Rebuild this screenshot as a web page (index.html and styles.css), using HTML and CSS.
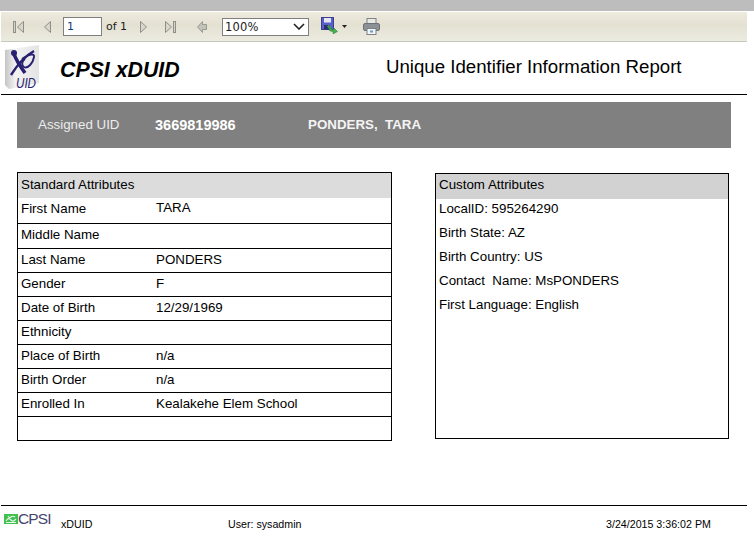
FILE: index.html
```html
<!DOCTYPE html>
<html lang="en">
<head>
<meta charset="utf-8">
<title>CPSI xDUID</title>
<link rel="stylesheet" href="styles.css">
</head>
<body>
<div class="topband"></div>
<div class="page">
  <div class="toolbar">
    <svg class="tool t-first" width="12" height="12" viewBox="0 0 12 12"><rect x="0.5" y="0.5" width="2" height="11" fill="#d8d6cc" stroke="#8f8f8a"/><path d="M10.5 0.5v11L4.5 6z" fill="#d8d6cc" stroke="#8f8f8a"/></svg>
    <svg class="tool t-prev" width="7" height="12" viewBox="0 0 7 12"><path d="M6.5 0.5v11L0.5 6z" fill="#d8d6cc" stroke="#8f8f8a"/></svg>
    <div class="pagebox">1</div>
    <span class="of">of 1</span>
    <svg class="tool t-next" width="7" height="12" viewBox="0 0 7 12"><path d="M0.5 0.5v11L6.5 6z" fill="#d8d6cc" stroke="#8f8f8a"/></svg>
    <svg class="tool t-last" width="12" height="12" viewBox="0 0 12 12"><path d="M0.5 0.5v11L6.5 6z" fill="#d8d6cc" stroke="#8f8f8a"/><rect x="8.5" y="0.5" width="2" height="11" fill="#d8d6cc" stroke="#8f8f8a"/></svg>
    <svg class="tool t-back" width="10" height="12" viewBox="0 0 10 12"><path d="M5.5 0.5L0.5 6l5 5.5V8.5h4v-5h-4z" fill="#c4c3ba" stroke="#9a9a94"/></svg>
    <div class="zoombox"><span>100%</span><svg width="12" height="7" viewBox="0 0 12 7"><path d="M1 1l5 5 5-5" fill="none" stroke="#222" stroke-width="1.6"/></svg></div>
    <svg class="tool t-save" width="17" height="17" viewBox="0 0 17 17"><rect x="0.5" y="0.5" width="12" height="12" fill="#5a5fc8" stroke="#3b3f8e"/><rect x="3" y="1" width="7" height="4.5" fill="#e6e6f2"/><rect x="3" y="8" width="6" height="4.5" fill="#2c2f70"/><path d="M7 8.5l2.500 3.500" stroke="#3fa34a" stroke-width="2.400"/><path d="M8 10.500l4 2.500 1-2 3.500 3.500-4.500 2.500.3-2-4-1.500z" fill="#46ad50" stroke="#2c7b36" stroke-width=".5"/></svg>
    <svg class="tool t-caret" width="5" height="3" viewBox="0 0 5 3"><path d="M0 0h5L2.500 3z" fill="#222"/></svg>
    <svg class="tool t-print" width="17" height="17" viewBox="0 0 17 17"><rect x="4" y="0.5" width="9" height="6" fill="#e9e9e6" stroke="#7d8288"/><rect x="0.500" y="5.500" width="16" height="7" rx="1.500" fill="#8c9196" stroke="#6d7277"/><rect x="4" y="10.500" width="9" height="6" fill="#f4f4f2" stroke="#7d8288"/><rect x="7" y="12.500" width="3" height="2" fill="#5aa0d0"/></svg>
  </div>

  <header class="head">
    <svg class="logo" width="44" height="48" viewBox="0 0 44 48">
      <defs><linearGradient id="box" x1="0" x2="1" y1="0" y2="0"><stop offset="0" stop-color="#c4c4c4"/><stop offset=".3" stop-color="#f2f2f2"/><stop offset="1" stop-color="#e4e4e4"/></linearGradient></defs>
      <path d="M1 5L35 0v38L5 44 1 40z" fill="url(#box)"/>
      <circle cx="10" cy="8" r="3" fill="#27216f"/>
      <path d="M10 9C12 15 16 21 21 28" fill="none" stroke="#27216f" stroke-width="3.600"/>
      <path d="M7 30C12 22 21 11 30 6" fill="none" stroke="#27216f" stroke-width="2.400"/>
      <path d="M18 14C25 9 31 8 30 12C29 18 24 24 20 22C17 20 18 16 21 14" fill="none" stroke="#27216f" stroke-width="1.900"/>
      <text class="logo-uid" x="12" y="43" textLength="20" lengthAdjust="spacingAndGlyphs">UID</text>
    </svg>
    <div class="brand">CPSI xDUID</div>
    <div class="report">Unique Identifier Information Report</div>
  </header>

  <section class="band">
    <span class="b-label">Assigned UID</span>
    <span class="b-id">3669819986</span>
    <span class="b-name">PONDERS,&nbsp; TARA</span>
  </section>

  <main class="tables">
    <div class="std">
      <div class="std-head">Standard Attributes</div>
      <div class="row r-first"><span class="k">First Name</span><span class="v v-up">TARA</span></div>
      <div class="row r-mid"><span class="k">Middle Name</span></div>
      <div class="row"><span class="k">Last Name</span><span class="v">PONDERS</span></div>
      <div class="row"><span class="k">Gender</span><span class="v">F</span></div>
      <div class="row"><span class="k">Date of Birth</span><span class="v">12/29/1969</span></div>
      <div class="row"><span class="k">Ethnicity</span></div>
      <div class="row"><span class="k">Place of Birth</span><span class="v">n/a</span></div>
      <div class="row"><span class="k">Birth Order</span><span class="v">n/a</span></div>
      <div class="row"><span class="k">Enrolled In</span><span class="v">Kealakehe Elem School</span></div>
      <div class="row"></div>
    </div>
    <div class="custom">
      <div class="cus-head">Custom Attributes</div>
      <div class="cus-row">LocalID: 595264290</div>
      <div class="cus-row">Birth State: AZ</div>
      <div class="cus-row">Birth Country: US</div>
      <div class="cus-row">Contact&nbsp; Name: MsPONDERS</div>
      <div class="cus-row">First Language: English</div>
    </div>
  </main>

  <footer class="foot">
    <div class="foot-logo">
      <svg width="14" height="10" viewBox="0 0 14 10"><rect width="14" height="10" fill="#3fc04f"/><path d="M2 7c2-3 3-3 5-1s3 1 5-1M4 2c1 2 2 2 3 1s3-1 4 0M2 8.500h10" fill="none" stroke="#e9f9e9" stroke-width="1.100"/></svg>
      <span class="cpsi">CPSI</span>
    </div>
    <span class="f-app">xDUID</span>
    <span class="f-user">User: sysadmin</span>
    <span class="f-date">3/24/2015 3:36:02 PM</span>
  </footer>
</div>
</body>
</html>
```

FILE: styles.css
```css
* { box-sizing: border-box; }
html, body { margin: 0; padding: 0; background: #fff; }
body { font-family: "Liberation Sans", Arial, sans-serif; color: #000; width: 754px; height: 543px; overflow: hidden; }
.topband { height: 11px; background: #bdbdbd; }
.page { width: 746px; margin-left: 1px; padding-top: 1px; }

.toolbar {
  height: 30px;
  display: flex;
  align-items: center;
  background: linear-gradient(#eeebdf 0%, #e4e1d2 45%, #ecebe0 100%);
  border-bottom: 1px solid #c9c8c0;
  font-family: "DejaVu Sans", Verdana, sans-serif;
  font-size: 11px;
  color: #1c1c1c;
}
.tool { flex: none; display: block; }
.t-first { margin-left: 12px; }
.t-prev { margin-left: 19px; }
.pagebox {
  width: 39px; height: 19px; margin-left: 12px;
  background: #fff; border: 1px solid #7f7f7f;
  padding: 2px 0 0 3px; line-height: 13px; color: #0d3d78;
}
.of { margin-left: 4px; width: 21px; white-space: nowrap; }
.t-next { margin-left: 13px; }
.t-last { margin-left: 18px; }
.t-back { margin-left: 20px; }
.zoombox {
  width: 87px; height: 18px; margin-left: 15px;
  background: #fff; border: 1px solid #7f7f7f;
  display: flex; align-items: center; justify-content: space-between;
  padding: 0 3px 0 2px; font-size: 11.500px; letter-spacing: .2px;
}
.t-save { margin: -3px 0 0 12px; }
.t-caret { margin-left: 4px; }
.t-print { margin-left: 16px; }

.head { height: 53px; border-bottom: 1px solid #000; display: flex; padding-left: 3px; }
.logo { flex: none; margin-top: 3px; }
.brand { margin: 16px 0 0 12px; width: 326px; font-size: 21.330px; font-weight: bold; font-style: italic; line-height: 24px; color: #000; }
.report { margin-top: 14px; font-size: 18.670px; line-height: 22px; white-space: nowrap; }
.logo-uid { font-family: "Liberation Sans", sans-serif; font-size: 15px; font-style: italic; fill: #27216f; }

.band {
  margin: 7px 0 0 16px; width: 714px; height: 46px;
  background: #808080; color: #fff; display: flex; align-items: center;
  padding-left: 21px;
}
.b-label { width: 117px; font-size: 13.330px; color: #ececec; margin-top: -1px; }
.b-id { width: 153px; font-size: 14.500px; font-weight: bold; }
.b-name { font-size: 13.330px; font-weight: bold; color: #f4f4f4; margin-top: -1px; white-space: nowrap; }

.tables { display: flex; align-items: flex-start; margin: 24px 0 0 16px; font-size: 13.330px; line-height: 15px; }
.std { width: 375px; height: 269px; border: 1px solid #000; }
.std-head { height: 25px; background: #dcdcdc; padding: 4px 0 0 3px; }
.row { height: 24px; border-bottom: 1px solid #000; display: flex; padding: 3px 0 0 3px; }
.row:last-child { border-bottom: none; }
.r-first { height: 26px; }
.r-mid { height: 25px; }
.k { width: 135px; flex: none; }
.v-up { margin-top: -1px; }

.custom { width: 294px; height: 266px; margin: 1px 0 0 43px; border: 1px solid #000; }
.cus-head { height: 25px; background: #d2d2d2; padding: 3px 0 0 3px; }
.cus-row { height: 24px; padding: 2px 0 0 3px; }

.foot { margin-top: 64px; border-top: 1px solid #000; height: 30px; display: flex; font-size: 10.670px; line-height: 12px; }
.foot-logo { display: flex; align-items: center; width: 57px; margin: 6px 0 0 3px; height: 14px; }
.foot-logo svg { flex: none; }
.cpsi { font-size: 15.500px; letter-spacing: -.9px; line-height: 14px; color: #45456e; }
.f-app { width: 167px; margin-top: 12px; }
.f-user { width: 378px; margin-top: 12px; }
.f-date { margin-top: 12px; white-space: nowrap; }
```
